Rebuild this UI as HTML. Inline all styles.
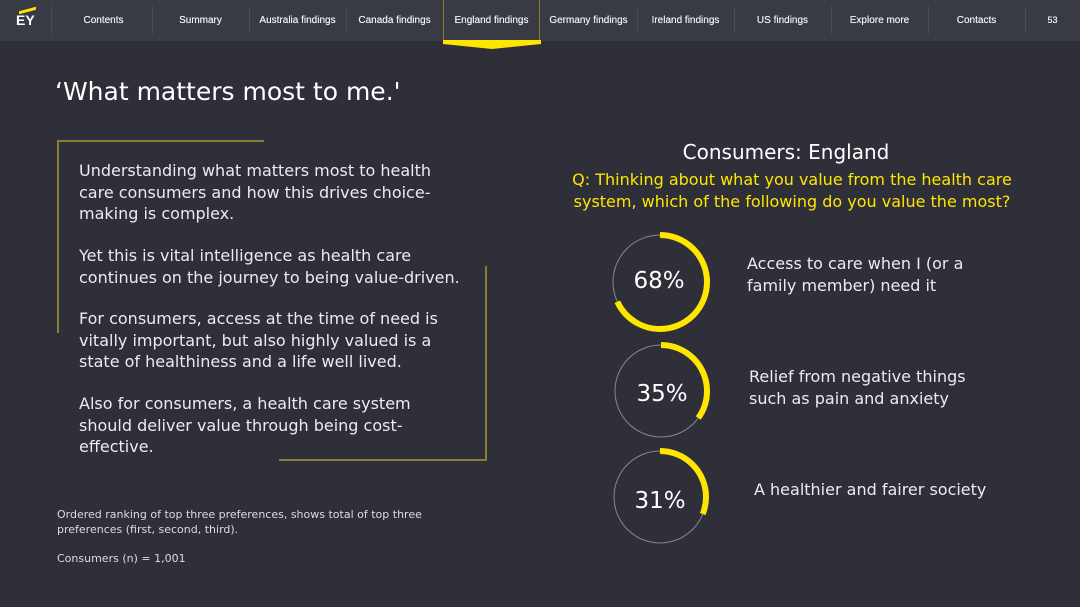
<!DOCTYPE html>
<html><head><meta charset="utf-8"><style>
*{margin:0;padding:0;box-sizing:border-box}
body{width:1080px;height:607px;overflow:hidden;background:#2e2f38;font-family:"DejaVu Sans","Liberation Sans",sans-serif;color:#fff;position:relative}
.nav{position:absolute;left:0;top:0;width:1080px;height:41px;background:#393b44;font-family:"Liberation Sans",sans-serif}
.nav .it{position:absolute;top:0;height:41px;width:97px;text-align:center;font-size:10px;line-height:41px;color:#f0f0f0;font-weight:normal;text-shadow:0 0 .4px #fff}
.sep{position:absolute;top:6px;width:1px;height:28px;background:#4a4c55}
.abs{position:absolute}
.p{position:absolute;left:79px;font-size:16px;line-height:21.5px;color:#ececec}
.ln{position:absolute;background:#8a7d2c}
</style></head><body>
<div class="nav">
<div class="abs" style="left:16px;top:12px;font-weight:bold;font-size:14px;color:#fff">EY</div>
<div class="abs" style="left:19px;top:9px;width:17px;height:3px;background:#ffe600;transform:skewY(-15deg)"></div>
<div class="sep" style="left:51px"></div>
<div class="it" style="left:55px">Contents</div><div class="sep" style="left:152px"></div>
<div class="it" style="left:152px">Summary</div><div class="sep" style="left:249px"></div>
<div class="it" style="left:249px">Australia findings</div><div class="sep" style="left:346px"></div>
<div class="it" style="left:346px">Canada findings</div>
<div class="it" style="left:443px;border:1px solid #8a7d2c;border-top:none">England findings</div>
<div class="it" style="left:540px">Germany findings</div><div class="sep" style="left:637px"></div>
<div class="it" style="left:637px">Ireland findings</div><div class="sep" style="left:734px"></div>
<div class="it" style="left:734px">US findings</div><div class="sep" style="left:831px"></div>
<div class="it" style="left:831px">Explore more</div><div class="sep" style="left:928px"></div>
<div class="it" style="left:928px">Contacts</div><div class="sep" style="left:1025px"></div>
<div class="it" style="left:1025px;width:55px;font-size:9px">53</div>
</div>
<svg class="abs" style="left:443px;top:40px" width="98" height="10"><polygon points="0,0 98,0 98,4 49,9 0,4" fill="#ffe600"/></svg>
<div class="abs" style="left:55px;top:77px;font-size:25px;color:#fff">‘What matters most to me.'</div>
<div class="ln" style="left:57px;top:140px;width:207px;height:2px"></div>
<div class="ln" style="left:57px;top:140px;width:2px;height:193px"></div>
<div class="ln" style="left:485px;top:266px;width:2px;height:195px"></div>
<div class="ln" style="left:279px;top:459px;width:208px;height:2px"></div>
<div class="p" style="top:160px">Understanding what matters most to health<br>care consumers and how this drives choice-<br>making is complex.</div>
<div class="p" style="top:245px">Yet this is vital intelligence as health care<br>continues on the journey to being value-driven.</div>
<div class="p" style="top:308px">For consumers, access at the time of need is<br>vitally important, but also highly valued is a<br>state of healthiness and a life well lived.</div>
<div class="p" style="top:393px">Also for consumers, a health care system<br>should deliver value through being cost-<br>effective.</div>
<div class="abs" style="left:57px;top:507px;font-size:11px;line-height:15px;color:#ddd">Ordered ranking of top three preferences, shows total of top three<br>preferences (first, second, third).</div>
<div class="abs" style="left:57px;top:552px;font-size:11px;color:#ddd">Consumers (n) = 1,001</div>
<div class="abs" style="left:560px;top:140px;width:452px;text-align:center;font-size:20px;color:#fff">Consumers: England</div>
<div class="abs" style="left:540px;top:169px;width:504px;text-align:center;font-size:16px;line-height:22px;color:#ffe600">Q: Thinking about what you value from the health care<br>system, which of the following do you value the most?</div>
<svg class="abs" style="left:0;top:0" width="1080" height="607">
<g fill="none">
<circle cx="660" cy="282" r="47" stroke="#888" stroke-width="1"/>
<circle cx="660" cy="282" r="47" stroke="#ffe600" stroke-width="6" stroke-dasharray="200.8 400" transform="rotate(-90 660 282)"/>
<circle cx="661" cy="391" r="46" stroke="#888" stroke-width="1"/>
<circle cx="661" cy="391" r="46" stroke="#ffe600" stroke-width="6" stroke-dasharray="101 400" transform="rotate(-90 661 391)"/>
<circle cx="660" cy="497" r="46" stroke="#888" stroke-width="1"/>
<circle cx="660" cy="497" r="46" stroke="#ffe600" stroke-width="6" stroke-dasharray="89.6 400" transform="rotate(-90 660 497)"/>
</g>
<g fill="#fff" font-family="DejaVu Sans, sans-serif" font-size="23" text-anchor="middle">
<text x="659" y="288">68%</text><text x="662" y="401">35%</text><text x="660" y="508">31%</text>
</g>
</svg>
<div class="abs" style="left:747px;top:253px;font-size:16px;line-height:22px;color:#ececec">Access to care when I (or a<br>family member) need it</div>
<div class="abs" style="left:749px;top:366px;font-size:16px;line-height:22px;color:#ececec">Relief from negative things<br>such as pain and anxiety</div>
<div class="abs" style="left:754px;top:480px;font-size:16px;color:#ececec">A healthier and fairer society</div>
</body></html>
